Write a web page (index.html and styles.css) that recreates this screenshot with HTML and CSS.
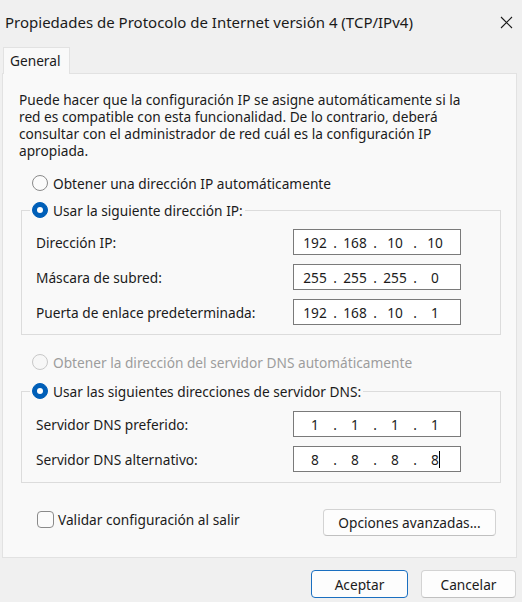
FILE: index.html
```html
<!DOCTYPE html>
<html lang="es">
<head>
<meta charset="utf-8">
<title>Propiedades de Protocolo de Internet versión 4 (TCP/IPv4)</title>
<link rel="stylesheet" href="styles.css">
</head>
<body>
<div class="window">
  <div class="titlebar">
    <span class="title">Propiedades de Protocolo de Internet versión 4 (TCP/IPv4)</span>
    <span class="close"><svg width="13" height="13" viewBox="0 0 13 13"><path d="M1 1 L12 12 M12 1 L1 12" stroke="#1a1a1a" stroke-width="1.1" fill="none"/></svg></span>
  </div>
  <div class="tabs"><div class="tab">General</div></div>
  <div class="panel">
    <p class="intro">Puede hacer que la configuración IP se asigne automáticamente si la<br>red es compatible con esta funcionalidad. De lo contrario, deberá<br>consultar con el administrador de red cuál es la configuración IP<br>apropiada.</p>

    <label class="option top"><span class="radio"></span>Obtener una dirección IP automáticamente</label>

    <fieldset class="group ipgroup">
      <legend><label class="option"><span class="radio checked"></span>Usar la siguiente dirección IP:</label></legend>
      <div class="rows">
        <span class="lbl">Dirección IP:</span>
        <div class="ip"><span>192</span><i>.</i><span>168</span><i>.</i><span>10</span><i>.</i><span>10</span></div>
        <span class="lbl">Máscara de subred:</span>
        <div class="ip"><span>255</span><i>.</i><span>255</span><i>.</i><span>255</span><i>.</i><span>0</span></div>
        <span class="lbl">Puerta de enlace predeterminada:</span>
        <div class="ip"><span>192</span><i>.</i><span>168</span><i>.</i><span>10</span><i>.</i><span>1</span></div>
      </div>
    </fieldset>

    <label class="option disabled dnsauto"><span class="radio"></span>Obtener la dirección del servidor DNS automáticamente</label>

    <fieldset class="group dnsgroup">
      <legend><label class="option"><span class="radio checked"></span>Usar las siguientes direcciones de servidor DNS:</label></legend>
      <div class="rows">
        <span class="lbl">Servidor DNS preferido:</span>
        <div class="ip"><span>1</span><i>.</i><span>1</span><i>.</i><span>1</span><i>.</i><span>1</span></div>
        <span class="lbl">Servidor DNS alternativo:</span>
        <div class="ip"><span>8</span><i>.</i><span>8</span><i>.</i><span>8</span><i>.</i><span class="caret">8</span></div>
      </div>
    </fieldset>

    <div class="bottomrow">
      <label class="check"><span class="box"></span>Validar configuración al salir</label>
      <button class="btn adv">Opciones avanzadas...</button>
    </div>
  </div>
  <div class="footer">
    <button class="btn ok">Aceptar</button>
    <button class="btn cancel">Cancelar</button>
  </div>
</div>
</body>
</html>
```

FILE: styles.css
```css
* { box-sizing: border-box; }
html, body { margin: 0; padding: 0; }
body {
  width: 522px;
  height: 602px;
  background: #f0f0f0;
  font-family: "Noto Sans", "Open Sans", sans-serif;
  font-size: 13.7px;
  color: #1b1b1b;
  overflow: hidden;
}
.window { display: flex; flex-direction: column; }
.titlebar {
  height: 47px;
  display: flex;
  align-items: flex-start;
  justify-content: space-between;
  padding: 12px 9px 0 5px;
}
.title { font-size: 15px; line-height: 20px; color: #1a1a1a; }
.close { display: flex; padding-top: 4px; }

.tabs { display: flex; padding-left: 3px; height: 26px; }
.tab {
  width: 67px;
  height: 27px;
  background: #f9f9f9;
  border: 1px solid #e2e2e2;
  border-bottom: none;
  padding: 4px 0 0 6px;
  line-height: 17px;
  position: relative;
  z-index: 1;
}
.panel {
  margin: 0 5px 0 2px;
  background: #f9f9f9;
  border: 1px solid #e2e2e2;
  height: 485px;
  padding: 17px 15px 0 16px;
}
.intro { margin: 0; line-height: 17px; }

.option { display: flex; align-items: center; height: 20px; gap: 5px; white-space: nowrap; }
.option.top { margin: 14px 0 0 13px; }
.radio {
  width: 16px; height: 16px; border-radius: 50%;
  border: 1px solid #8a8a8a; background: #fbfbfb; flex: none;
  display: flex; align-items: center; justify-content: center;
}
.radio.checked { background: #005fb8; border-color: #005fb8; }
.radio.checked::after { content: ""; width: 6px; height: 6px; border-radius: 50%; background: #fff; }
.option.disabled { color: #9d9d9d; }
.option.disabled .radio { border-color: #c8c8c8; background: #f7f7f7; }

.group {
  margin: 7px 0 0 2px;
  border: 1px solid #dcdcdc;
  padding: 9px 0 9px 14px;
  min-width: 0;
}
.group legend { padding: 0 2px; margin-left: -6px; }
.dnsgroup { margin-top: 9px; padding-top: 10px; padding-bottom: 10px; }
.option.dnsauto { margin: 17px 0 0 13px; }

.rows {
  display: grid;
  grid-template-columns: 257px 168px;
  row-gap: 9px;
  align-items: center;
}
.ip {
  height: 26px;
  border: 1px solid #7a7a7a;
  background: #fff;
  display: flex;
  align-items: center;
  padding-left: 4px;
}
.ip span { width: 34px; text-align: center; }
.ip i { font-style: normal; width: 6px; text-align: center; }
.caret { position: relative; }
.caret::after {
  content: ""; position: absolute; left: 21px; top: 1px; width: 1px; height: 17px; background: #000;
}

.bottomrow {
  display: flex;
  justify-content: space-between;
  align-items: flex-start;
  margin-top: 26px;
  padding-right: 5px;
}
.check { display: flex; align-items: center; gap: 4px; margin: 0 0 0 18px; height: 20px; }
.box { width: 17px; height: 17px; border: 1px solid #8a8a8a; border-radius: 4px; background: #fbfbfb; }

.btn {
  font: inherit;
  color: #1b1b1b;
  background: #fdfdfd;
  border: 1px solid #d3d3d3;
  border-bottom-color: #c0c0c0;
  border-radius: 4px;
  height: 28px;
  padding: 0;
}
.adv { width: 173px; height: 27px; }
.footer {
  display: flex;
  justify-content: flex-end;
  gap: 13px;
  padding: 12px 6px 0 0;
}
.ok { width: 97px; border: 1px solid #1a6fc0; }
.cancel { width: 95px; }
```
